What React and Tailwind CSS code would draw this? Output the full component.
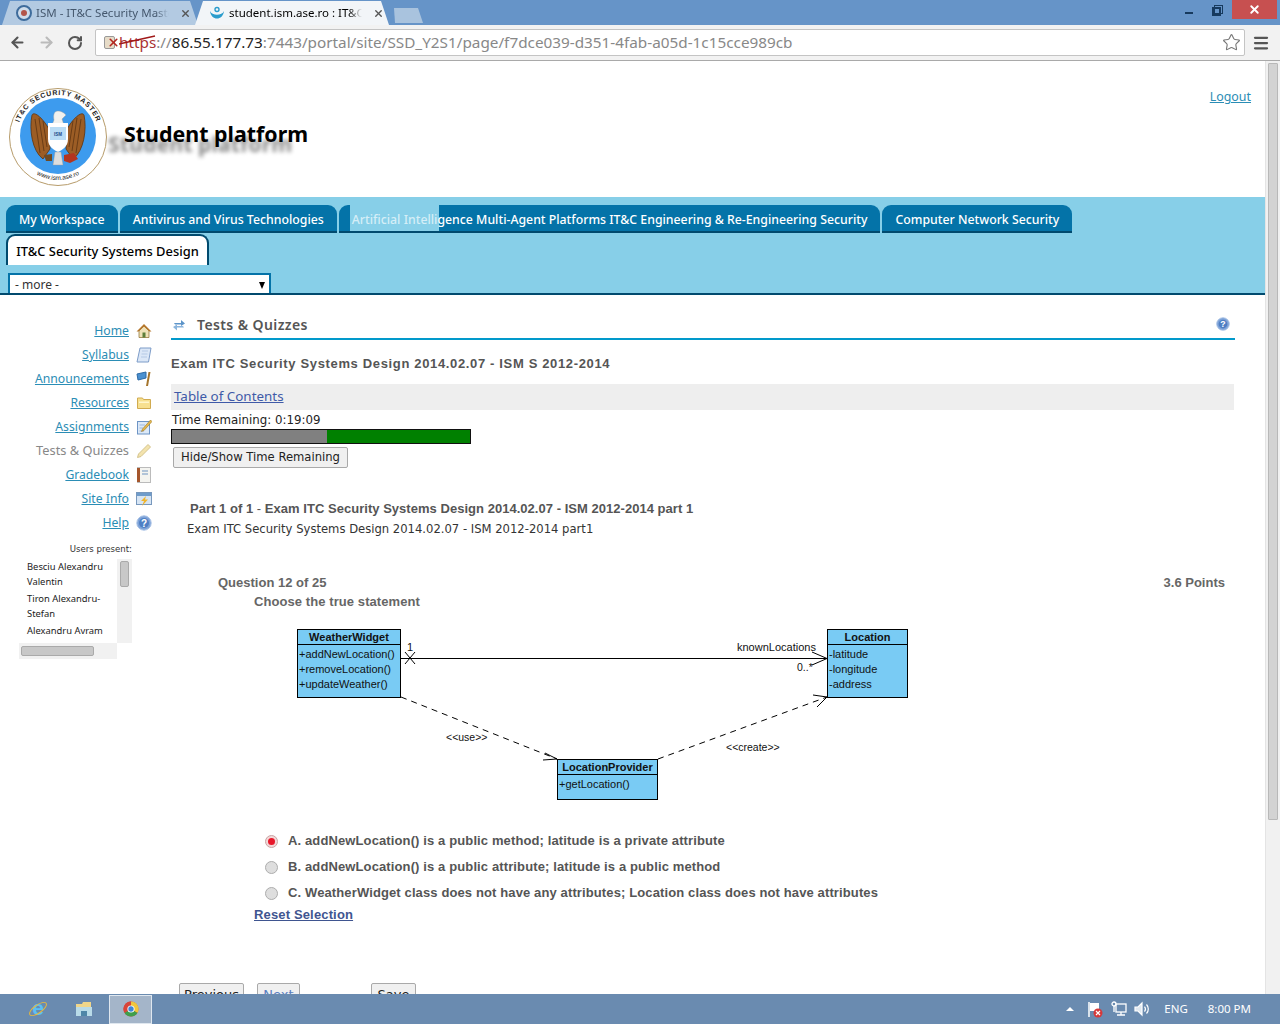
import React from 'react';
import { ArrowLeft, ArrowRight, RotateCw, Star, Menu, X } from 'lucide-react';

const sans = 'font-["Liberation_Sans",Arial,sans-serif]';
const deja = 'font-["DejaVu_Sans",sans-serif]';
const noto = 'font-["Noto_Sans",sans-serif]';

// --- sidebar icons ---
const HomeIcon = () => (
  <svg width="16" height="16" viewBox="0 0 16 16">
    <path d="M3 8 L8 3 L13 8 L13 14.5 L3 14.5 Z" fill="#efe2b8" stroke="#8a6a2a" strokeWidth="0.7" />
    <path d="M0.5 8.5 L8 1 L15.5 8.5 L13.5 8.5 L8 3.5 L2.5 8.5 Z" fill="#b5762a" />
    <rect x="6.5" y="9.5" width="3" height="5" fill="#5d7f3b" />
  </svg>
);
const ScrollIcon = () => (
  <svg width="16" height="16" viewBox="0 0 16 16">
    <path d="M4 1 H15 L12.5 15 H1 Z" fill="#dbe7f7" stroke="#7d9cc8" />
    <path d="M6 4 H12 M5.5 7 H11.5 M5 10 H11" stroke="#b5c9e5" />
  </svg>
);
const FlagIcon = () => (
  <svg width="16" height="16" viewBox="0 0 16 16">
    <path d="M1 3 L10 1 L10 7 L2 9 Z" fill="#4a90d0" stroke="#2d6aa5" />
    <path d="M12.5 1 L14.5 1 L12 15 L10 15 Z" fill="#a5752c" />
  </svg>
);
const FolderIcon = () => (
  <svg width="16" height="16" viewBox="0 0 16 16">
    <path d="M1.5 3 H6.5 L7.5 4.5 H14.5 V13.5 H1.5 Z" fill="#f7e08f" stroke="#d1ab50" />
    <rect x="3" y="6.5" width="10" height="1.5" fill="#fff6cc" />
  </svg>
);
const AssignIcon = () => (
  <svg width="16" height="16" viewBox="0 0 16 16">
    <rect x="1.5" y="2.5" width="12" height="12.5" fill="#dce9f8" stroke="#6d94c5" />
    <path d="M3.5 6 H9 M3.5 9 H7 M3.5 12 H8" stroke="#9db7db" />
    <path d="M14.5 1 L16 2.5 L8 11.5 L5.5 12.5 L6.5 10 Z" fill="#e5b94c" stroke="#99762a" strokeWidth="0.6" />
  </svg>
);
const PencilIcon = () => (
  <svg width="16" height="16" viewBox="0 0 16 16">
    <path d="M12 1.5 L14.5 4 L5 13.5 L1.5 14.5 L2.5 11 Z" fill="#f3e3ad" stroke="#d5c48e" />
  </svg>
);
const GradeIcon = () => (
  <svg width="16" height="16" viewBox="0 0 16 16">
    <rect x="1.5" y="0.5" width="13" height="15" fill="#f4f4f0" stroke="#bbb" />
    <rect x="1" y="1" width="3" height="14" fill="#a5562c" />
    <path d="M6 4 H12 M6 7 H12" stroke="#6f94c0" strokeWidth="1.2" />
  </svg>
);
const SiteIcon = () => (
  <svg width="16" height="16" viewBox="0 0 16 16">
    <rect x="0.5" y="1.5" width="15" height="12" fill="#d7e5f4" stroke="#7898bd" />
    <rect x="1" y="2" width="14" height="3" fill="#6f9ccb" />
    <path d="M10 5 L5 10 H8 L6 15 L12 8.5 H9 Z" fill="#f0b52c" />
  </svg>
);
const HelpIcon = ({ size = 16 }) => (
  <svg width={size} height={size} viewBox="0 0 16 16">
    <circle cx="8" cy="8" r="7.2" fill="#7ea3d8" stroke="#aac3e6" />
    <circle cx="8" cy="8" r="5" fill="#4f7fc4" />
    <text x="8" y="11.5" textAnchor="middle" fontSize="10" fontWeight="700" fill="#fff" fontFamily="Liberation Sans">?</text>
  </svg>
);

const navItems = [
  { label: 'Home', icon: <HomeIcon /> },
  { label: 'Syllabus', icon: <ScrollIcon /> },
  { label: 'Announcements', icon: <FlagIcon /> },
  { label: 'Resources', icon: <FolderIcon /> },
  { label: 'Assignments', icon: <AssignIcon /> },
  { label: 'Tests & Quizzes', icon: <PencilIcon />, current: true },
  { label: 'Gradebook', icon: <GradeIcon /> },
  { label: 'Site Info', icon: <SiteIcon /> },
  { label: 'Help', icon: <HelpIcon /> },
];

const Logo = () => (
  <svg width="100" height="100" viewBox="0 0 100 100" className="shrink-0">
    <circle cx="50" cy="50" r="48.5" fill="#fff" stroke="#b79c6b" />
    <circle cx="50" cy="49" r="38" fill="#3d9bee" />
    <defs>
      <path id="logoTop" d="M 9 49 A 41 41 0 0 1 91 49" />
      <path id="logoBottom" d="M 9 65 A 44 44 0 0 0 91 65" />
    </defs>
    <text fontSize="7" fontWeight="700" fontFamily="Liberation Sans" fill="#222" letterSpacing="0.8" textAnchor="middle">
      <textPath href="#logoTop" startOffset="50%">IT&amp;C SECURITY MASTER</textPath>
    </text>
    <text fontSize="6.4" fontFamily="Liberation Sans" fill="#222" textAnchor="middle">
      <textPath href="#logoBottom" startOffset="50%">www.ism.ase.ro</textPath>
    </text>
    <path d="M41 42 C34 30 26 24 24 28 C21 42 24 64 35 72 L42 62 Z" fill="#9c5d25" stroke="#5d3412" strokeWidth="0.8" />
    <path d="M59 42 C66 30 74 24 76 28 C79 42 76 64 65 72 L58 62 Z" fill="#9c5d25" stroke="#5d3412" strokeWidth="0.8" />
    <path d="M27 32 L32 66 M31 31 L36 64 M35 34 L39 60 M73 32 L68 66 M69 31 L64 64 M65 34 L61 60" stroke="#5d3412" strokeWidth="0.8" />
    <path d="M50 24 C46 24 45 28 46 33 L44 38 H56 L54 32 L58 28 C55 25 53 24 50 24 Z" fill="#f1f1ee" stroke="#999" strokeWidth="0.4" />
    <path d="M40 36 H60 V52 C60 60 54 63 50 65 C46 63 40 60 40 52 Z" fill="#fff" />
    <rect x="42" y="40" width="16" height="13" fill="#b9dcf5" />
    <text x="50" y="49" textAnchor="middle" fontSize="4.5" fontWeight="700" fontFamily="Liberation Sans" fill="#1d4d8a">ISM</text>
    <path d="M47 65 H53 L55 78 H45 Z" fill="#ddd" stroke="#999" strokeWidth="0.4" />
    <path d="M56 68 L66 66 L70 72 L62 76 L56 74 Z" fill="#b3351f" />
    <path d="M36 68 L44 67 L44 74 L38 74 Z" fill="#6f4a22" />
  </svg>
);

const Diagram = () => {
  const Box = ({ x, y, w, h, head, title, lines }) => (
    <g>
      <rect x={x} y={y} width={w} height={h} fill="#79cbf4" stroke="#000" />
      <line x1={x} y1={y + head} x2={x + w} y2={y + head} stroke="#000" />
      <text x={x + w / 2} y={y + 11.5} textAnchor="middle" fontSize="11" fontWeight="700" fill="#111">{title}</text>
      {lines.map((l, i) => (
        <text key={l} x={x + 1.5} y={y + 28 + i * 15} fontSize="11" fill="#111">{l}</text>
      ))}
    </g>
  );
  return (
    <svg width="620" height="175" viewBox="0 0 620 175" className="font-['Liberation_Sans',sans-serif]">
      <Box x={0.5} y={0.5} w={103} h={68} head={15} title="WeatherWidget" lines={['+addNewLocation()', '+removeLocation()', '+updateWeather()']} />
      <Box x={530.5} y={0.5} w={80} h={68} head={15} title="Location" lines={['-latitude', '-longitude', '-address']} />
      <Box x={260.5} y={130.5} w={100} h={40} head={15} title="LocationProvider" lines={['+getLocation()']} />
      <line x1="104" y1="29.5" x2="530" y2="29.5" stroke="#000" />
      <path d="M108 23 L118 35 M118 23 L108 35" stroke="#000" fill="none" />
      <path d="M515 23 L530 29.5 L515 36" stroke="#000" fill="none" />
      <path d="M104 68 L260 130" stroke="#000" strokeDasharray="6 5" fill="none" />
      <path d="M248 124 L260 130 L246 131" stroke="#000" fill="none" />
      <path d="M361 130 L530 68" stroke="#000" strokeDasharray="6 5" fill="none" />
      <path d="M516 66 L530 68 L520 78" stroke="#000" fill="none" />
      <text x="110" y="22" fontSize="11" fill="#111">1</text>
      <text x="440" y="22" fontSize="11" fill="#111">knownLocations</text>
      <text x="500" y="42" fontSize="10.5" fill="#111">0..*</text>
      <text x="149" y="112" fontSize="10.5" fill="#111">&lt;&lt;use&gt;&gt;</text>
      <text x="429" y="122" fontSize="10.5" fill="#111">&lt;&lt;create&gt;&gt;</text>
    </svg>
  );
};

const BrowserTab = ({ title, active, icon, className }) => (
  <div className={`relative flex h-[24px] items-center rounded-t-[5px] pl-[14px] [clip-path:polygon(8px_0,calc(100%-8px)_0,100%_100%,0_100%)] ${active ? 'bg-[#f2f5f8] text-black' : 'bg-[#b3cae2] text-[#45586e]'} ${className}`}>
    {icon}
    <span className={`ml-[4px] w-[133px] whitespace-nowrap text-[11.5px] [mask-image:linear-gradient(to_right,black_90%,transparent)] ${noto}`}>{title}</span>
    <X size={11} strokeWidth={3} className="ml-[11px] shrink-0 text-[#555]" />
  </div>
);

const CourseTab = ({ children, className = '' }) => (
  <div className={`relative flex h-[28px] items-center whitespace-nowrap rounded-t-[9px] border-b-2 border-[#014a6e] bg-[#0473a8] px-[13px] pt-[5px] text-[12.3px] font-medium text-white ${noto} ${className}`}>
    {children}
  </div>
);

const Option = ({ letter, text, checked }) => (
  <div className="flex h-[26px] items-center">
    {checked ? (
      <span className="ml-[11px] flex h-[13px] w-[13px] items-center justify-center rounded-full border border-[#c9a5a5] bg-[#f3d8d8]">
        <span className="h-[7px] w-[7px] rounded-full bg-[#e8172a]" />
      </span>
    ) : (
      <span className="ml-[11px] h-[13px] w-[13px] rounded-full border border-[#adadad] bg-[#dedede]" />
    )}
    <span className={`ml-[10px] text-[13px] font-bold tracking-[0.12px] text-[#555] ${sans}`}>{letter}. {text}</span>
  </div>
);

const PageButton = ({ children, className = '' }) => (
  <div className={`flex h-[24px] items-center justify-center rounded-[2px] border border-[#a9a9a9] bg-[#f0f0f0] text-[13px] ${deja} ${className}`}>{children}</div>
);

export default function App() {
  return (
    <div className="flex h-[1024px] w-[1280px] flex-col overflow-hidden bg-white">
      {/* window title bar + tabs */}
      <div className="flex h-[25px] shrink-0 items-end bg-[#6694c8]">
        <BrowserTab
          title="ISM - IT&C Security Maste"
          className="ml-[2px] w-[196px]"
          icon={
            <span className="flex h-[16px] w-[16px] shrink-0 items-center justify-center rounded-full border-2 border-[#3e6c9c] bg-[#cfdcea]">
              <span className="h-[6px] w-[6px] rounded-full bg-[#b3554a]" />
            </span>
          }
        />
        <BrowserTab
          active
          title="student.ism.ase.ro : IT&C"
          className="-ml-[3px] w-[194px]"
          icon={
            <svg width="16" height="16" viewBox="0 0 16 16" className="shrink-0">
              <path d="M1 6 C2 16 14 16 15 6 C13 11 3 11 1 6 Z" fill="#2a9ccc" />
              <circle cx="8" cy="4.5" r="2" fill="none" stroke="#2a9ccc" strokeWidth="1.4" />
            </svg>
          }
        />
        <div className="ml-[1px] mb-[2px] h-[15px] w-[33px] rounded-t-[4px] bg-[#a9c3de] [clip-path:polygon(4px_0,calc(100%-5px)_0,100%_100%,5px_100%)]" />
        <div className="flex-1" />
        <div className="flex h-[25px] items-start self-start">
          <div className="mt-[12px] h-[2px] w-[8px] bg-[#173a5e]" />
          <div className="relative ml-[19px] mt-[7px] h-[9px] w-[9px] border-2 border-[#173a5e]">
            <div className="absolute -right-[4px] -top-[4px] h-[9px] w-[9px] border border-[#173a5e]" />
          </div>
          <div className="ml-[11px] flex h-[19px] w-[45px] items-center justify-center bg-[#c75050]">
            <X size={13} strokeWidth={3.5} className="text-white" />
          </div>
          <div className="w-[3px]" />
        </div>
      </div>

      {/* toolbar */}
      <div className="flex h-[36px] shrink-0 items-center border-b border-[#a9a9a9] bg-[#f2f2f2]">
        <ArrowLeft size={17} strokeWidth={3} className="ml-[9px] text-[#555]" />
        <ArrowRight size={17} strokeWidth={3} className="ml-[12px] text-[#bbb]" />
        <RotateCw size={16} strokeWidth={3} className="ml-[12px] text-[#555]" />
        <div className={`ml-[12px] flex h-[27px] w-[1150px] items-center rounded-[2px] border border-[#c4c4c4] bg-white text-[15.3px] ${noto}`}>
          <span className="relative ml-[8px] h-[13px] w-[11px] rounded-[2px] border border-[#999] bg-[#e7dcc8]">
            <X size={13} strokeWidth={3} className="absolute -right-[6px] -top-px text-[#b3261e]" />
          </span>
          <span className="relative ml-[4px] text-[#a33]">
            https
            <svg width="38" height="12" viewBox="0 0 38 12" className="absolute left-0 top-[4px]"><path d="M0 9 L36 1" stroke="#a01818" strokeWidth="1.3" /></svg>
          </span>
          <span className="text-[#888]">://</span>
          <span className="text-[#222]">86.55.177.73</span>
          <span className="text-[#888]">:7443/portal/site/SSD_Y2S1/page/f7dce039-d351-4fab-a05d-1c15cce989cb</span>
          <div className="flex-1" />
          <Star size={19} strokeWidth={1.4} className="mr-[3px] text-[#777]" />
        </div>
        <Menu size={18} strokeWidth={3} className="ml-[7px] text-[#555]" />
      </div>

      <div className="flex min-h-0 flex-1">
        {/* page */}
        <div className="w-[1265px] shrink-0 overflow-hidden">
          {/* banner */}
          <div className="flex h-[136px] items-start">
            <div className="ml-[8px] mt-[26px]"><Logo /></div>
            <div className={`ml-[16px] mt-[58px] whitespace-nowrap text-[21.4px] font-bold leading-[30px] text-black [text-shadow:-16px_10px_4px_#888] ${noto}`}>Student platform</div>
            <div className="flex-1" />
            <a className={`mr-[14px] mt-[27px] text-[12.4px] leading-[18px] text-[#2b8db5] underline ${noto}`}>Logout</a>
          </div>

          {/* course tabs */}
          <div className="h-[98px] border-b-2 border-[#014a6e] bg-[#87cfe8] pl-[6px] pt-[8px]">
            <div className="flex gap-[2px]">
              <CourseTab>My Workspace</CourseTab>
              <CourseTab>Antivirus and Virus Technologies</CourseTab>
              <CourseTab>
                <span className="absolute bottom-0 left-[11px] top-0 w-[89px] bg-[#87cfe8]" />
                <span className="relative"><span className="text-[#d5eef7]">Artificial Intelli</span>gence Multi-Agent Platforms IT&amp;C Engineering &amp; Re-Engineering Security</span>
              </CourseTab>
              <CourseTab>Computer Network Security</CourseTab>
            </div>
            <div className={`mt-[1px] flex h-[31px] w-[203px] items-center justify-center rounded-t-[9px] border-2 border-b-0 border-[#014a6e] bg-white pt-[2px] text-[12.9px] font-medium text-black ${noto}`}>
              IT&amp;C Security Systems Design
            </div>
            <div className="ml-[2px] mt-[8px] flex h-[20px] w-[263px] items-center justify-between border-[2px] border-b-0 border-[#0473a8] bg-white pl-[5px] pr-[4px] pt-[2px]">
              <span className={`text-[12px] text-[#333] ${noto}`}>- more -</span>
              <span className="h-0 w-0 border-x-[3.5px] border-t-[7px] border-x-transparent border-t-black" />
            </div>
          </div>

          <div className="flex">
            {/* left nav */}
            <div className="w-[171px] shrink-0">
              <div className="mt-[24px]">
                {navItems.map(item => (
                  <div key={item.label} className="flex h-[24px] items-center justify-end pr-[19px]">
                    <span className={`${noto} ${item.current ? 'text-[12.8px] text-[#888]' : 'text-[12.2px] text-[#2b8db5] underline'}`}>{item.label}</span>
                    <span className="ml-[7px] flex h-[16px] w-[16px] items-center justify-center">{item.icon}</span>
                  </div>
                ))}
              </div>
              <div className={`mt-[8px] w-[132px] text-right text-[8.6px] leading-[12px] text-[#333] ${deja}`}>Users present:</div>
              <div className="ml-[19px] mt-[4px] flex h-[100px] w-[113px] flex-col">
                <div className="flex h-[84px]">
                  <div className={`flex-1 overflow-hidden pl-[8px] text-[9.4px] leading-[15px] text-[#222] ${noto}`}>
                    <div className="whitespace-nowrap">Besciu Alexandru</div>
                    <div>Valentin</div>
                    <div className="mt-[2px] whitespace-nowrap">Tiron Alexandru-</div>
                    <div>Stefan</div>
                    <div className="mt-[2px] whitespace-nowrap">Alexandru Avram</div>
                  </div>
                  <div className="w-[15px] bg-[#f1f1f1] px-[3px] pt-[2px]">
                    <div className="h-[26px] rounded-[2px] border border-[#aaa] bg-[#c8c8c8]" />
                  </div>
                </div>
                <div className="flex h-[16px] w-[98px] items-center bg-[#f1f1f1] px-[2px]">
                  <div className="h-[10px] w-[73px] rounded-[2px] border border-[#aaa] bg-[#c8c8c8]" />
                </div>
              </div>
            </div>

            {/* tool */}
            <div className="w-[1064px] shrink-0">
              <div className="mt-[20px] flex h-[25px] items-center border-b-2 border-[#0299cb]">
                <svg width="14" height="14" viewBox="0 0 14 14" className="mb-[4px] ml-px">
                  <path d="M2 5 H9 V2 L13 5.5 L9 8 V6.5 H3 Z" fill="#5c94c9" />
                  <path d="M12 9.5 H5 V12.5 L1 9 L5 6.5 V8 H11 Z" fill="#8ab4dc" />
                </svg>
                <span className={`mb-[4px] ml-[11px] text-[14px] font-semibold tracking-[0.4px] text-[#555] ${noto}`}>Tests &amp; Quizzes</span>
                <div className="flex-1" />
                <span className="mb-[6px] mr-[5px]"><HelpIcon size={14} /></span>
              </div>

              <div className={`mt-[15px] text-[13px] font-bold leading-[18px] tracking-[0.65px] text-[#555] ${sans}`}>
                Exam ITC Security Systems Design 2014.02.07 - ISM S 2012-2014
              </div>
              <div className={`mt-[11px] flex h-[26px] w-[1063px] items-center bg-[#eeeeee] pb-px pl-[3px] text-[13.4px] text-[#3f5aa8] underline ${noto}`}>Table of Contents</div>
              <div className={`mt-[1px] pl-px text-[11.8px] leading-[18px] text-[#222] ${deja}`}>Time Remaining: 0:19:09</div>
              <div className="flex h-[15px] w-[300px] border border-[#111] bg-[#008000]">
                <div className="h-full w-[155px] bg-[#808080]" />
              </div>
              <div className={`ml-[2px] mt-[3px] flex h-[21px] w-[175px] items-center justify-center rounded-[2px] border border-[#a9a9a9] bg-[#f0f0f0] text-[11.6px] text-[#222] ${deja}`}>Hide/Show Time Remaining</div>

              <div className={`ml-[19px] mt-[32px] text-[13px] font-bold leading-[18px] tracking-[0.03px] text-[#555] ${sans}`}>
                Part 1 of 1 <span className="font-normal">-</span> Exam ITC Security Systems Design 2014.02.07 - ISM 2012-2014 part 1
              </div>
              <div className={`ml-[16px] mt-[2px] text-[11.6px] leading-[18px] text-[#333] ${deja}`}>Exam ITC Security Systems Design 2014.02.07 - ISM 2012-2014 part1</div>

              <div className="ml-[47px] mr-[10px] mt-[36px] flex items-center justify-between">
                <span className={`text-[13px] font-bold leading-[18px] text-[#666] ${sans}`}>Question 12 of 25</span>
                <span className={`text-[13px] font-bold leading-[18px] text-[#666] ${sans}`}>3.6 Points</span>
              </div>
              <div className={`ml-[83px] mt-[1px] text-[13px] font-bold leading-[18px] tracking-[0.08px] text-[#666] ${sans}`}>Choose the true statement</div>

              <div className="ml-[126px] mt-[18px]"><Diagram /></div>

              <div className="ml-[83px] mt-[24px]">
                <Option letter="A" text="addNewLocation() is a public method; latitude is a private attribute" checked />
                <Option letter="B" text="addNewLocation() is a public attribute; latitude is a public method" />
                <Option letter="C" text="WeatherWidget class does not have any attributes; Location class does not have attributes" />
              </div>
              <div className={`ml-[83px] text-[13px] font-bold leading-[18px] tracking-[0.15px] text-[#3f5590] underline ${sans}`}>Reset Selection</div>

              <div className="ml-[8px] mt-[59px] flex">
                <PageButton className="w-[65px] text-[#222]">Previous</PageButton>
                <PageButton className="ml-[13px] w-[43px] text-[#5a7fc0]">Next</PageButton>
                <PageButton className="ml-[71px] w-[45px] text-[#222]">Save</PageButton>
              </div>
            </div>
          </div>
        </div>

        {/* page scrollbar */}
        <div className="w-[15px] shrink-0 border-l border-[#e4e4e4] bg-[#f1f1f1] px-[2px] pt-[2px]">
          <div className="h-[757px] rounded-[1px] border border-[#b8b8b8] bg-[#d3d3d3]" />
        </div>
      </div>

      {/* taskbar */}
      <div className={`flex h-[30px] shrink-0 items-center bg-[#6a8bb0] text-white ${noto}`}>
        <svg width="20" height="20" viewBox="0 0 20 20" className="ml-[28px]">
          <text x="10" y="16" textAnchor="middle" fontSize="21" fontWeight="700" fontFamily="Liberation Sans" fill="#5cc0f5">e</text>
          <ellipse cx="10" cy="10" rx="10" ry="4" transform="rotate(-35 10 10)" fill="none" stroke="#e8b93c" strokeWidth="1" />
        </svg>
        <svg width="18" height="16" viewBox="0 0 18 16" className="ml-[27px]">
          <path d="M1 3 H7 L8 1 H16 V14 H1 Z" fill="#f0d68a" />
          <rect x="1" y="6" width="16" height="9" fill="#b9dbe8" />
          <rect x="6" y="10" width="6" height="5" fill="#4f86a8" />
        </svg>
        <div className="ml-[16px] flex h-[29px] w-[43px] items-center justify-center border border-[#dfe7ef] bg-[#a4b5c9]">
          <svg width="16" height="16" viewBox="0 0 16 16">
            <circle cx="8" cy="8" r="7.5" fill="#d8453a" />
            <path d="M8 8 L14.5 11.8 A7.5 7.5 0 0 1 1.5 11.8 Z" fill="#3e9f4c" />
            <path d="M8 8 L1.5 11.8 A7.5 7.5 0 0 1 8 0.5 Z" fill="#d8453a" />
            <path d="M8 8 L8 0.5 A7.5 7.5 0 0 1 14.5 11.8 Z" fill="#f0c63e" />
            <circle cx="8" cy="8" r="3.6" fill="#fff" />
            <circle cx="8" cy="8" r="2.7" fill="#3f86d6" />
          </svg>
        </div>
        <div className="flex-1" />
        <span className="h-0 w-0 border-x-[4px] border-b-[4px] border-x-transparent border-b-white" />
        <svg width="17" height="17" viewBox="0 0 17 17" className="ml-[13px]">
          <path d="M2 1 V16" stroke="#fff" strokeWidth="1.5" />
          <path d="M3 2 H12 V10 H3 Z" fill="#fff" />
          <circle cx="11" cy="12" r="4.5" fill="#d6393a" />
          <path d="M9 10 L13 14 M13 10 L9 14" stroke="#fff" strokeWidth="1.2" />
        </svg>
        <svg width="16" height="16" viewBox="0 0 16 16" className="ml-[7px]" fill="none" stroke="#fff" strokeWidth="1.3">
          <rect x="5" y="3" width="10" height="8" />
          <circle cx="3" cy="3" r="2" />
          <path d="M3 5 V11 M10 11 V14 M6 14 H14" />
        </svg>
        <svg width="16" height="16" viewBox="0 0 16 16" className="ml-[7px]" fill="none" stroke="#fff" strokeWidth="1.2">
          <path d="M1 6 H4 L8 2 V14 L4 10 H1 Z" fill="#dfe7ef" />
          <path d="M10.5 5.5 A4 4 0 0 1 10.5 10.5 M12.5 3.5 A6.5 6.5 0 0 1 12.5 12.5" />
        </svg>
        <span className="ml-[14px] text-[11.5px]">ENG</span>
        <span className="ml-[20px] mr-[29px] text-[11.5px]">8:00 PM</span>
      </div>
    </div>
  );
}
